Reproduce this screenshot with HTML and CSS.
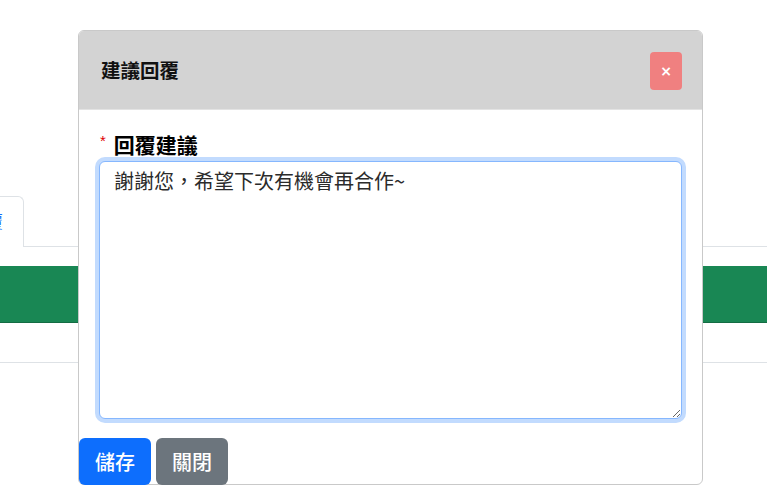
FILE: index.html
```html
<!DOCTYPE html>
<html lang="zh-Hant">
<head>
<meta charset="utf-8">
<title>建議回覆</title>
<link rel="stylesheet" href="styles.css">
</head>
<body>
<div class="page">
  <div class="tabs">
    <div class="tab">建議回覆</div>
  </div>
  <div class="green-bar"></div>
  <div class="row-line"></div>
</div>

<div class="modal">
  <div class="modal-header">
    <div class="modal-title">建議回覆</div>
    <button class="btn-close-x" type="button">×</button>
  </div>
  <div class="modal-body">
    <label class="field-label"><span class="req">*</span>回覆建議</label>
    <textarea class="field-text">謝謝您，希望下次有機會再合作~</textarea>
  </div>
  <div class="modal-footer">
    <button class="btn btn-primary" type="button">儲存</button>
    <button class="btn btn-secondary" type="button">關閉</button>
  </div>
</div>
</body>
</html>
```

FILE: styles.css
```css
html, body {
  margin: 0;
  padding: 0;
  background: #ffffff;
  font-family: "Noto Sans CJK TC", "Noto Sans", sans-serif;
  color: #212529;
}

.page {
  width: 767px;
  height: 494px;
  overflow: hidden;
}

.tabs {
  margin-top: 196px;
  height: 50px;
  border-bottom: 1px solid #dee2e6;
  display: flex;
}

.tab {
  margin-left: -96px;
  width: 120px;
  box-sizing: border-box;
  height: 51px;
  border: 1px solid #dee2e6;
  border-bottom: none;
  border-top-right-radius: 6px;
  background: #ffffff;
  color: #0d6efd;
  font-size: 17px;
  line-height: 48px;
  text-align: right;
  padding-right: 20px;
  white-space: nowrap;
}

.green-bar {
  margin-top: 19px;
  height: 56px;
  background: #198754;
  border-bottom: 1px solid #146c43;
}

.row-line {
  height: 39px;
  border-bottom: 1px solid #dee2e6;
}

.modal {
  position: absolute;
  left: 78px;
  top: 30px;
  width: 625px;
  height: 455px;
  box-sizing: border-box;
  border: 1px solid #c9c9c9;
  border-radius: 6px;
  background: #ffffff;
  display: flex;
  flex-direction: column;
}

.modal-header {
  height: 78px;
  background: #d3d3d3;
  border-top-left-radius: 5px;
  border-top-right-radius: 5px;
  border-bottom: 1px solid #e3e3e3;
  display: flex;
  align-items: center;
  justify-content: space-between;
  padding: 0 20px 0 22px;
}

.modal-title {
  font-size: 19.5px;
  font-weight: 700;
  color: #111;
  line-height: 1.2;
}

.btn-close-x {
  width: 32px;
  height: 38px;
  margin-top: 2px;
  border: none;
  border-radius: 4px;
  background: #f08080;
  color: #ffffff;
  font-family: "DejaVu Sans", sans-serif;
  font-size: 14px;
  font-weight: 700;
  padding: 0;
  line-height: 38px;
}

.modal-body {
  padding: 21px 20px 0 20px;
  display: flex;
  flex-direction: column;
}

.field-label {
  font-size: 21px;
  font-weight: 700;
  color: #000;
  line-height: 26px;
  display: flex;
  align-items: flex-start;
}

.req {
  color: #e00000;
  font-family: "Liberation Sans", sans-serif;
  font-size: 15px;
  font-weight: 400;
  line-height: 20px;
  margin-right: 8px;
  margin-left: 1px;
}

.field-text {
  margin-top: 4px;
  height: 258px;
  box-sizing: border-box;
  border: 1px solid #86b7fe;
  border-radius: 6px;
  box-shadow: 0 0 0 4px #c2dbfe;
  outline: none;
  padding: 6px 14px;
  font-family: "Noto Sans CJK TC", sans-serif;
  font-size: 20px;
  line-height: 1.3;
  color: #2b2b2b;
  resize: vertical;
}

.modal-footer {
  margin-top: auto;
  display: flex;
  gap: 5px;
}

.btn {
  width: 72px;
  height: 47px;
  border: none;
  border-radius: 6px;
  color: #ffffff;
  font-family: "Noto Sans CJK TC", sans-serif;
  font-size: 20px;
  font-weight: 500;
  padding: 0;
  margin-bottom: -1px;
}

.btn-primary {
  background: #0d6efd;
}

.btn-secondary {
  background: #6c757d;
}
```
